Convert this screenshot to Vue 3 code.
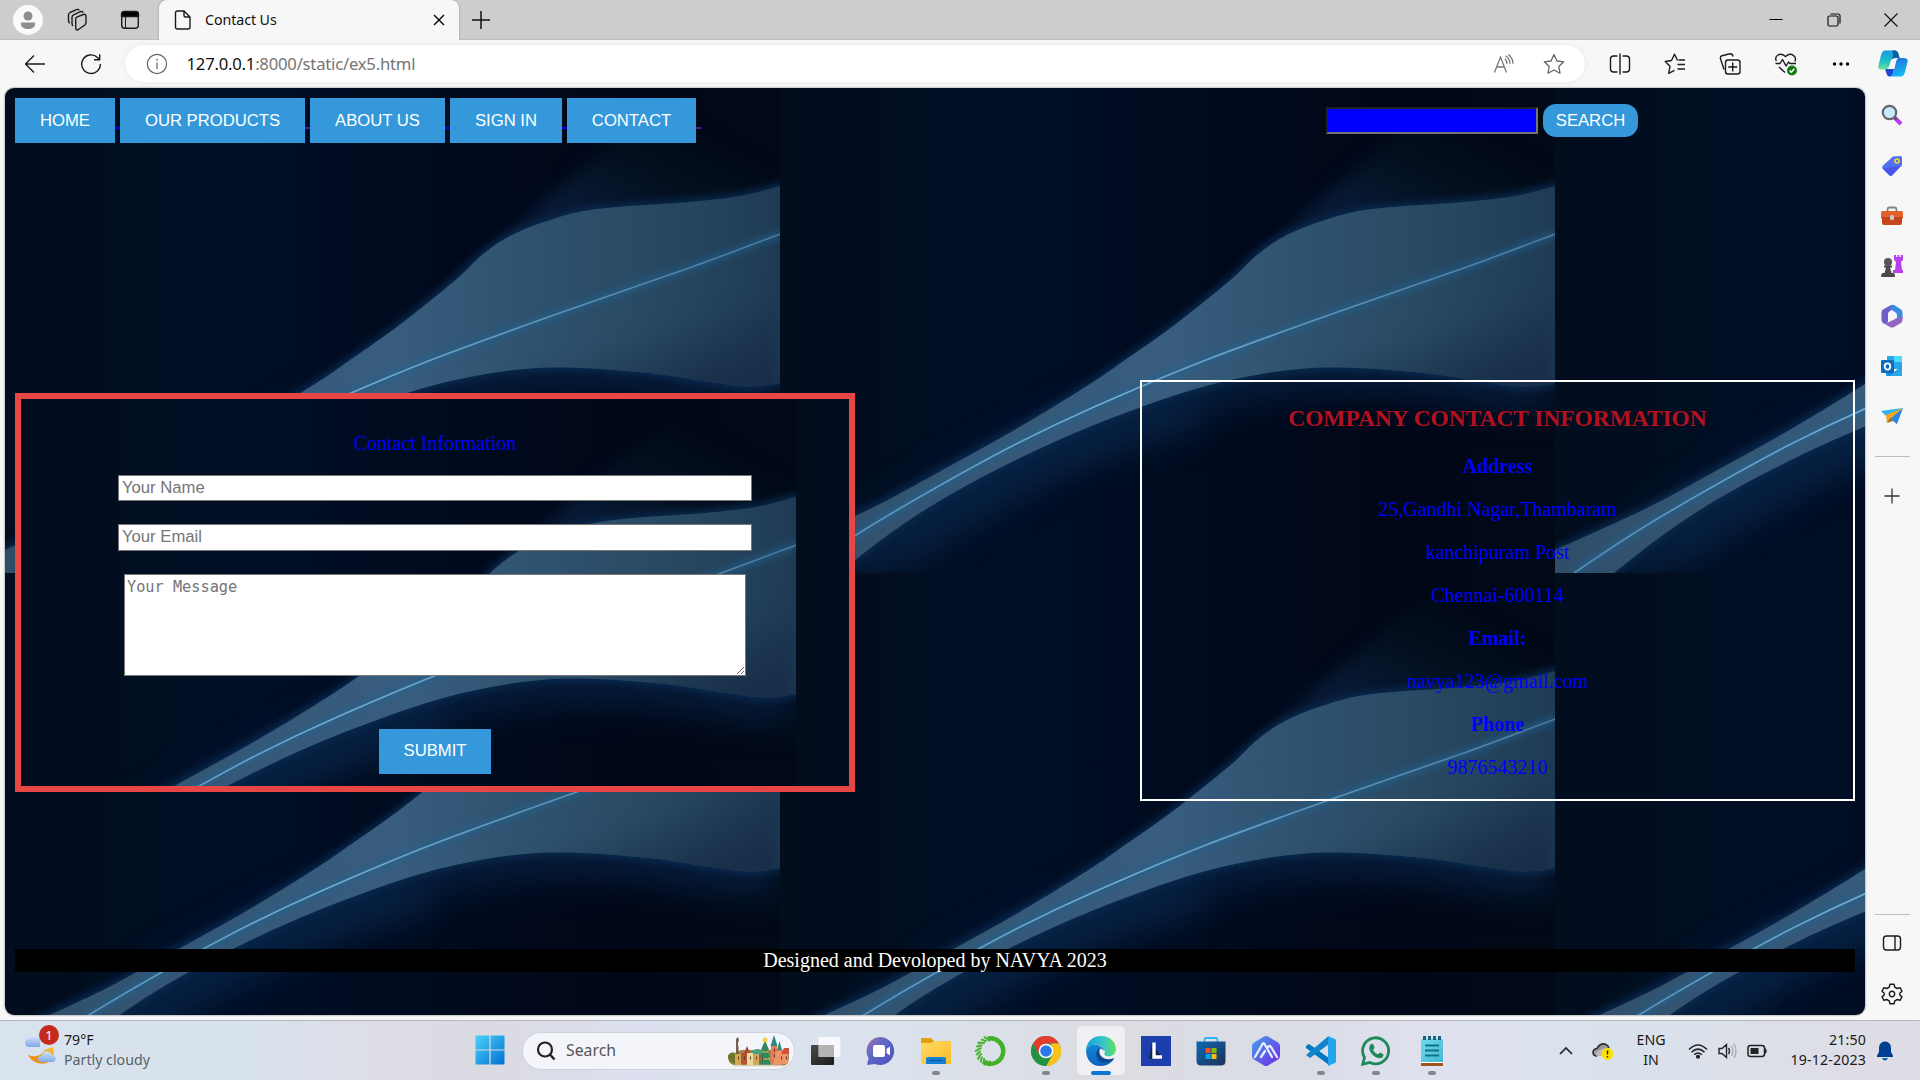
<script setup>
const nav = [
  { t: 'HOME', w: 100, c: '#0000ee' },
  { t: 'OUR PRODUCTS', w: 185, c: '#551a8b' },
  { t: 'ABOUT US', w: 135, c: '#0000ee' },
  { t: 'SIGN IN', w: 112, c: '#0000ee' },
  { t: 'CONTACT', w: 129, c: '#551a8b' }
]
const lines = [
  { t: 'Address', b: true },
  { t: '25,Gandhi Nagar,Thambaram' },
  { t: 'kanchipuram Post' },
  { t: 'Chennai-600114' },
  { t: 'Email:', b: true },
  { t: 'navya123@gmail.com' },
  { t: 'Phone', b: true },
  { t: '9876543210' }
]
const tiles = [0, 1, 2].flatMap((c) => [0, 1].map((r) => ({ x: c * 775, y: r * 485 })))

// Catmull-Rom spline through a list of points, as cubic segments
function curve(p) {
  let d = ''
  for (let i = 0; i < p.length - 1; i++) {
    const a = p[i - 1] || p[i]
    const b = p[i]
    const c = p[i + 1]
    const e = p[i + 2] || c
    const n = [b[0] + (c[0] - a[0]) / 6, b[1] + (c[1] - a[1]) / 6, c[0] - (e[0] - b[0]) / 6, c[1] - (e[1] - b[1]) / 6, c[0], c[1]]
    d += 'C' + n.map((v) => v.toFixed(1)).join(' ')
  }
  return d
}
const upper = [[775, 98], [735, 108], [684, 114], [592, 121], [545, 132], [505, 148], [477, 167], [454, 189], [420, 217], [385, 244], [345, 272], [310, 296], [238, 340], [166, 380], [94, 419], [0, 462]]
const lower = [[59, 485], [112, 444], [168, 408], [238, 371], [314, 337], [402, 305], [465, 289], [520, 281], [574, 280], [644, 285], [698, 293], [735, 298], [755, 298], [775, 295]]
const beam = [[19, 485], [84, 442], [166, 394], [238, 355], [314, 319], [426, 272], [569, 220], [684, 180], [775, 146]]
const wave = 'M775 98' + curve(upper) + 'V485H59' + curve(lower) + 'Z'
const beamPath = 'M19 485' + curve(beam)
const belowWave = 'M59 485' + curve(lower)

const specks = Array.from({ length: 46 }, (_, i) => {
  const a = 1.7 + (i / 46) * 2.9
  const r = 10.6 + ((i * 7) % 9) * 0.55
  return { x: 16 + Math.cos(a) * r, y: 16 + Math.sin(a) * r }
})
</script>

<template>
  <div class="desktop">
    <header class="tabs">
      <div class="cell avatar-cell">
        <svg width="30" height="30" viewBox="0 0 30 30"><circle cx="15" cy="15" r="15" fill="#fafafa" /><circle cx="15" cy="11" r="4.500" fill="#8d8d8d" /><path d="M8 17.500H22V19C22 22.300 19 24 15 24S8 22.300 8 19Z" fill="#8d8d8d" /></svg>
      </div>
      <div class="cell ws">
        <svg width="24" height="24" viewBox="0 0 24 24" class="ln"><path d="M11.800 9.200 18.200 6.500Q21 5.700 21 8.300V14.800Q21 16 19.800 17L13.500 21.500Q10.800 22.800 10.700 20V11Q10.700 9.700 11.800 9.200Z" /><path d="M8 18Q7 17 7 15.500V9.300Q7 7.500 8.500 6.800L15.500 3.700Q17.500 3.200 18.300 4.500" /><path d="M4.700 15.200Q3.500 14.200 3.500 12.700V7Q3.500 5.300 5 4.500L11.500 1.600Q13.300 1 14.300 2.200" /></svg>
      </div>
      <div class="cell ta">
        <svg width="20" height="20" viewBox="0 0 20 20" class="ln"><rect x="1.700" y="1.700" width="16.600" height="16.600" rx="3" /><path d="M1.500 6.500V4.500Q1.500 1.500 4.500 1.500H15.500Q18.500 1.500 18.500 4.500V6.500Z" fill="#000" /><path d="M5.500 6V18" stroke-width="1" /></svg>
      </div>
      <div class="tab">
        <svg width="17" height="20" viewBox="0 0 17 20" class="ln"><path d="M3.500 1H10L16 7V17Q16 19 14 19H3.500Q1.500 19 1.500 17V3Q1.500 1 3.500 1ZM10 1V5.500Q10 7 11.500 7H16" /></svg>
        <span class="tab-title">Contact Us</span>
        <svg class="tab-x" width="12" height="12" viewBox="0 0 12 12"><path d="M1 1 11 11M11 1 1 11" stroke="#111" stroke-width="1.500" /></svg>
      </div>
      <svg class="newtab" width="18" height="18" viewBox="0 0 18 18"><path d="M9 0V18M0 9H18" stroke="#111" stroke-width="1.500" /></svg>
      <div class="winbtns">
        <div><svg width="14" height="14" viewBox="0 0 14 14"><path d="M.5 6.500H13.500" stroke="#000" stroke-width="1" /></svg></div>
        <div><svg width="14" height="14" viewBox="0 0 14 14" fill="none" stroke="#111" stroke-width="1.200"><rect x="1" y="3" width="10" height="10" rx="1.500" /><path d="M3.500 1H11Q13 1 13 3V10.500" /></svg></div>
        <div><svg width="14" height="14" viewBox="0 0 14 14"><path d="M.5.5 13.500 13.500M13.500.5.5 13.500" stroke="#111" stroke-width="1.200" /></svg></div>
      </div>
    </header>

    <div class="toolbar">
      <div class="tb back"><svg width="22" height="20" viewBox="0 0 22 20" class="ln"><path d="M21 10H2M10 1.500 1.500 10 10 18.500" /></svg></div>
      <div class="tb reload"><svg width="22" height="22" viewBox="0 0 22 22" class="ln"><path d="M20.300 11A9.300 9.300 0 1 1 17.500 4.500L19.500 6.500M19.700 1.200V6.700H14" /></svg></div>
      <div class="omnibox">
        <svg class="info" width="22" height="22" viewBox="0 0 22 22" fill="none" stroke="#666" stroke-width="1.200"><circle cx="11" cy="11" r="9.600" /><path d="M11 9.500V16" /><path d="M11 6V7.500" stroke-width="1.600" /></svg>
        <span class="url"><b>127.0.0.1</b>:8000/static/ex5.html</span>
        <svg class="read" width="22" height="20" viewBox="0 0 22 20" fill="none" stroke="#777" stroke-width="1.300"><path d="M1.500 18.500 7.500 3 13.500 18.500M3.700 13H11.300M12 4.800Q14 6.800 14 9.800M12.500 1.800Q17 4.800 17 9.800M15.500.5Q20 4.500 20 9.800" /></svg>
        <svg class="star" width="22" height="22" viewBox="0 0 22 22" fill="none" stroke="#666" stroke-width="1.300" stroke-linejoin="round"><path d="M11 1.500 14 8 20.700 8.800 15.800 13.500 17 20.300 11 17 5 20.300 6.200 13.500 1.300 8.800 8 8Z" /></svg>
      </div>
      <div class="tools">
        <div><svg width="22" height="22" viewBox="0 0 22 22" class="ln"><path d="M8.500 3H4.500Q1.500 3 1.500 6V16Q1.500 19 4.500 19H8.500M11 .5V21.500M13.500 3H17.500Q20.500 3 20.500 6V16Q20.500 19 17.500 19H13.500" /></svg></div>
        <div><svg width="22" height="22" viewBox="0 0 22 22" class="ln"><path d="M13.500 7.500 10.500 1.200 7.500 7.500 1.200 8.500 6 13.300 4.700 20.300 10.500 17.300M14.500 7H21M13.500 11.500H21M13.500 16H21" /></svg></div>
        <div><svg width="22" height="22" viewBox="0 0 22 22" class="ln"><path d="M5 16.500 1.500 5.700Q1 3.500 3 2.700L11 .8Q13.300.5 14 3.500M6.500 9.500Q6.500 7 9 7H18.500Q21 7 21 9.500V18.500Q21 21 18.500 21H9Q6.500 21 6.500 18.500ZM13.700 9.500V18.500M9.200 14H18.200" /></svg></div>
        <div><svg width="24" height="24" viewBox="0 0 24 24" class="ln"><path d="M2.300 9C0 4 6-.5 11.500 4.500 17-.5 23 4 21 9.500M1.500 11.500H6L8.500 7.500 12 14 14.500 10 16 11.500H22M5 15 11 20.500" /><circle cx="18" cy="18.500" r="5" fill="#107c10" stroke="none" /><path d="M15.700 18.500 17.300 20.300 20.300 16.800" stroke="#fff" /></svg></div>
        <div><svg width="18" height="6" viewBox="0 0 18 6"><circle cx="2.500" cy="3" r="1.700" /><circle cx="9" cy="3" r="1.700" /><circle cx="15.500" cy="3" r="1.700" /></svg></div>
      </div>
      <svg class="copilot" width="30" height="27" viewBox="0 0 30 27">
        <defs>
          <linearGradient id="cpA" x1="0" y1="0" x2="0" y2="1"><stop offset="0" stop-color="#1499e0" /><stop offset=".55" stop-color="#20bfc5" /><stop offset="1" stop-color="#6de09a" /></linearGradient>
          <linearGradient id="cpB" x1="0" y1="0" x2=".4" y2="1"><stop offset="0" stop-color="#2b62db" /><stop offset="1" stop-color="#15b9f5" /></linearGradient>
        </defs>
        <path d="M7 19H16L15.500 22Q14.500 26.500 11.500 26.500 9.500 26.500 8.700 24Z" fill="#1c47cf" />
        <path d="M7 .5H17Q19.500.5 20.500 4L21.500 8H17Q13.500 8 12.300 12L11 16.500Q10 19.500 7 19.500H3Q-.5 19.500.5 15.500L3 5Q4.200.5 7 .5Z" fill="url(#cpA)" />
        <path d="M14 .5H17Q19.500.5 20.500 4L21.500 8H17Q15 8 13.800 9.500 16 5 14 .5Z" fill="#0e5d9c" />
        <path d="M20.500 8H26Q30.500 8 29.500 12L27 22Q25.800 26.500 22.500 26.500H12Q14.500 25.500 15.500 22L18 12Q18.700 8.500 20.500 8Z" fill="url(#cpB)" />
      </svg>
    </div>

    <div class="middle">
      <main class="page">
        <svg class="wall" width="1860" height="927" aria-hidden="true">
          <defs>
            <linearGradient id="base"><stop offset="0" stop-color="#020d1e" /><stop offset=".12" stop-color="#020e20" /><stop offset=".3" stop-color="#010e26" /><stop offset=".5" stop-color="#010c20" /><stop offset=".8" stop-color="#010718" /><stop offset="1" stop-color="#020916" /></linearGradient>
            <linearGradient id="wave" gradientUnits="userSpaceOnUse" x1="0" y1="0" x2="775" y2="0"><stop offset="0" stop-color="#2f4d69" /><stop offset=".25" stop-color="#355775" /><stop offset=".5" stop-color="#385d7e" /><stop offset=".65" stop-color="#305370" /><stop offset=".82" stop-color="#294a64" /><stop offset="1" stop-color="#1f3b54" /></linearGradient>
            <linearGradient id="waveDark" gradientUnits="userSpaceOnUse" x1="690" y1="225" x2="715" y2="300"><stop offset="0" stop-color="#172b46" stop-opacity="0" /><stop offset="1" stop-color="#172b46" stop-opacity=".85" /></linearGradient>
            <linearGradient id="haze" gradientUnits="userSpaceOnUse" x1="650" y1="10" x2="580" y2="130"><stop offset="0" stop-color="#04121f" stop-opacity="0" /><stop offset=".4" stop-color="#041320" stop-opacity=".7" /><stop offset="1" stop-color="#081a36" /></linearGradient>
            <linearGradient id="beam" gradientUnits="userSpaceOnUse" x1="0" y1="485" x2="775" y2="146"><stop offset="0" stop-color="#5088b0" /><stop offset=".45" stop-color="#74abd0" /><stop offset="1" stop-color="#47759b" /></linearGradient>
            <filter id="b4" x="-20%" y="-20%" width="140%" height="140%" color-interpolation-filters="sRGB"><feGaussianBlur stdDeviation="3.500" /></filter>
            <filter id="b8" x="-30%" y="-30%" width="160%" height="160%" color-interpolation-filters="sRGB"><feGaussianBlur stdDeviation="8" /></filter>
            <filter id="b25" x="-30%" y="-50%" width="160%" height="200%" color-interpolation-filters="sRGB"><feGaussianBlur stdDeviation="18" /></filter>
            <symbol id="tile" viewBox="0 0 775 485">
              <rect width="775" height="485" fill="url(#base)" />
              <path d="M800-10H690Q600 60 530 120L440 210H800Z" fill="url(#haze)" filter="url(#b8)" />
              <path :d="belowWave" fill="none" stroke="#072143" stroke-width="46" opacity=".85" filter="url(#b25)" />
              <path d="M110 470C200 405 300 345 420 322" fill="none" stroke="#08264a" stroke-width="34" opacity=".7" filter="url(#b25)" />
              <path :d="wave" fill="#0a2b52" stroke="#09274b" stroke-width="7" filter="url(#b4)" clip-path="url(#ribbonClip)" />
              <path :d="wave" fill="url(#wave)" clip-path="url(#ribbonClip)" />
              <g clip-path="url(#ribbonClip)"><path d="M430 310 560 235 775 190V310Z" fill="url(#waveDark)" filter="url(#b8)" clip-path="url(#waveClip)" /></g>
              <path :d="beamPath" fill="none" stroke="#1f6596" stroke-width="7" opacity=".6" filter="url(#b4)" />
              <path :d="beamPath" fill="none" stroke="url(#beam)" stroke-width="1.700" />
            </symbol>
            <clipPath id="ribbonClip"><path d="M-20-20H800V510H-20Z" /></clipPath>
            <clipPath id="waveClip"><path :d="wave" clip-rule="evenodd" /></clipPath>
          </defs>
          <use v-for="(p, i) in tiles" :key="i" href="#tile" :x="p.x" :y="p.y" width="775" height="485" />
        </svg>

        <div class="navrow">
          <nav>
            <a v-for="n in nav" :key="n.t"><button class="blue" :style="{ width: n.w + 'px' }">{{ n.t }}</button><i :style="{ background: n.c }"></i></a>
          </nav>
          <div class="search"><input class="bluein" /><button class="searchbtn">SEARCH</button></div>
        </div>

        <div class="panels">
          <form class="form" @submit.prevent>
            <svg class="wall" width="828" height="387" aria-hidden="true">
              <use href="#tile" x="0" y="0" width="775" height="485" /><use href="#tile" x="775" y="0" width="775" height="485" />
            </svg>
            <span class="legend">Contact Information</span>
            <input class="field name" placeholder="Your Name" />
            <input class="field email" placeholder="Your Email" />
            <textarea class="msg" placeholder="Your Message"></textarea>
            <button class="blue submit">SUBMIT</button>
          </form>
          <section class="company">
            <h3>COMPANY CONTACT INFORMATION</h3>
            <p v-for="l in lines" :key="l.t" :class="{ bold: l.b }">{{ l.t }}</p>
          </section>
        </div>
        <footer class="foot">Designed and Devoloped by NAVYA 2023</footer>
      </main>

      <aside class="side">
        <div class="s"><svg width="22" height="22" viewBox="0 0 22 22"><path d="M13 13 20 20" stroke="#b43df5" stroke-width="4" /><path d="M12.500 12.500 15.500 15.500" stroke="#555" stroke-width="2.500" /><circle cx="8.500" cy="8.500" r="6.700" fill="#c8e9fb" stroke="#666" stroke-width="2.200" /></svg></div>
        <div class="s low"><svg width="22" height="22" viewBox="0 0 22 22"><path d="M12 1.500 19 1Q21 1 21 3V10L11 20.500Q9.500 21.500 8 20L1.500 13.500Q.5 12 2 10.500Z" fill="#4c72ee" /><path d="M1.500 13.500 20.500 10.500 11 20.500Q9.500 21.500 8 20Z" fill="#474be8" opacity=".7" /><circle cx="16" cy="6" r="2" fill="#5274d8" stroke="#fbd33d" stroke-width="1.600" /></svg></div>
        <div class="s low"><svg width="24" height="22" viewBox="0 0 24 22"><path d="M7.500 6.500V4.500Q7.500 2.500 9.500 2.500H14.500Q16.500 2.500 16.500 4.500V6.500" fill="none" stroke="#858585" stroke-width="1.800" /><rect x="2" y="9" width="20" height="11" rx="2" fill="#cb451c" /><rect x="1" y="6" width="22" height="7.500" rx="1.500" fill="#e3602a" /><path d="M1.500 13H22.500" stroke="#a93316" /><rect x="10" y="10" width="4" height="5" rx="1.500" fill="#c9c9c9" /></svg></div>
        <div class="s"><svg width="24" height="24" viewBox="0 0 24 24"><path d="M14 1V6L16 8 15 16H13V19H23V16H22L21 8 23 6V1H21V3H19.500V1H17.500V3H16V1Z" fill="#b741ef" /><circle cx="8" cy="8" r="4" fill="#555" /><path d="M4 11.500H12V13.500H10L11.500 19H14Q15 20 15 23H1Q1 20 2.500 19H4.500L6 13.500H4Z" fill="#4a4a4a" /></svg></div>
        <div class="s"><svg width="22" height="24" viewBox="0 0 22 24"><path d="M10 1 2 5.500Q.5 6.500.5 8.500V16Q.5 18 2 19L4 20Q7 20 7 17V10Q7 8 9 7L14 3Z" fill="#6f5fc8" /><path d="M10 1Q12 .3 14 1.500L20 5.500Q21.500 6.500 21.500 9V14Q20 16.500 16 14.500V11Q16 9 14 8L9 5Z" fill="#3b8be0" /><path d="M21.500 12V16Q21.500 18 20 19L13 23Q11 24 9 23L2 19Q5 20 8 18L15 14Q17 15 21.500 12Z" fill="#9565c4" /><path d="M11.300 7.500 15 9.700V14.300L11.300 16.500 7.500 14.300V9.700Z" fill="#f7f7f7" /></svg></div>
        <div class="s"><svg width="22" height="22" viewBox="0 0 22 22"><rect x="6" y="1" width="15" height="13" rx="1" fill="#28a8ea" /><path d="M13 1H21V7H13Z" fill="#50d9ff" /><path d="M6 7H13V13H6Z" fill="#0364b8" /><path d="M5 12 13 17 21 11V20Q21 21 20 21H6Q5 21 5 20Z" fill="#1490df" /><path d="M21 11 9 21H20Q21 21 21 20Z" fill="#28a8ea" /><rect x="0" y="5" width="13" height="13" rx="1" fill="#0f6cbd" /><ellipse cx="6.500" cy="11.500" rx="2.800" ry="3.200" fill="none" stroke="#fff" stroke-width="1.800" /></svg></div>
        <div class="s"><svg width="22" height="18" viewBox="0 0 22 18"><path d="M0 4 22 1 6 10Z" fill="#2cb3ed" /><path d="M22 1 5 8 6 16Z" fill="#f7a51b" /><path d="M22 1 16 17 9 12Z" fill="#2788e4" /><path d="M6 16 9 11 12 14Z" fill="#ad6818" /></svg></div>
        <hr />
        <div class="plus"><svg width="16" height="16" viewBox="0 0 16 16"><path d="M8 .5V15.500M.5 8H15.500" stroke="#333" stroke-width="1.300" /></svg></div>
        <hr class="second" />
        <div class="s"><svg width="20" height="18" viewBox="0 0 20 18" class="ln"><rect x="1.500" y="2" width="17" height="14" rx="3" /><path d="M13 2V16" /></svg></div>
        <div class="s"><svg width="22" height="22" viewBox="-11 -11 22 22" class="ln"><path d="M-2-9.800H2L2.800-6.800Q4-6.500 5-5.500L8-6.300 10-2.800 7.800-.8V1L10 2.900 8 6.300 5 5.500Q4 6.500 2.800 6.800L2 9.800H-2L-2.800 6.800Q-4 6.500-5 5.500L-8 6.300-10 2.900-7.800 1V-.8L-10-2.800-8-6.300-5-5.500Q-4-6.500-2.800-6.800Z" /><circle r="2.700" /></svg></div>
      </aside>
    </div>

    <div class="taskbar">
      <div class="weather">
        <svg width="36" height="36" viewBox="0 0 36 36">
          <defs><linearGradient id="cl" x1="0" y1="0" x2="0" y2="1"><stop offset="0" stop-color="#d3e4fb" /><stop offset="1" stop-color="#7fa9e8" /></linearGradient><linearGradient id="mo" x1="1" y1="0" x2="0" y2="1"><stop offset="0" stop-color="#f5c02d" /><stop offset="1" stop-color="#ee7a10" /></linearGradient></defs>
          <path d="M5 18Q0 18 0 13.500 1 9 5 9 7 6 11 7 15 8 15 12V18Z" fill="url(#cl)" />
          <path d="M28 18Q31 30 22 34 9 37 3 26 14 30 20 21Z" fill="url(#mo)" />
          <path d="M17 33Q13 33 13 29.500 14 26 17 26.500 19 21 24 22.500 27 25 28 26.500 31 27 30.500 31 30 33 27 33Z" fill="url(#cl)" />
        </svg>
        <span class="badge">1</span>
        <div class="wtext"><span>79°F</span><span class="grey">Partly cloudy</span></div>
      </div>

      <div class="start"><svg width="30" height="30" viewBox="0 0 30 30"><defs><linearGradient id="win" x1="0" y1="0" x2="1" y2="1"><stop offset="0" stop-color="#4cd2fc" /><stop offset="1" stop-color="#0070cf" /></linearGradient></defs><path d="M1 .5H14.400V14.400H.5V1ZM15.600.5H29L29.500 1V14.400H15.600ZM.5 15.600H14.400V29.500H1L.5 29ZM15.600 15.600H29.500V29L29 29.500H15.600Z" fill="url(#win)" /></svg></div>

      <div class="tsearch">
        <svg width="20" height="20" viewBox="0 0 20 20"><circle cx="9" cy="8.500" r="7" fill="none" stroke="#222" stroke-width="2.200" /><path d="M14 13.500 18.500 18.500" stroke="#222" stroke-width="2.400" /></svg>
        <span>Search</span>
        <svg class="town" width="66" height="34" viewBox="0 0 66 34">
          <path d="M1 22Q3 18 8 19L14 16H62V24Q62 32 54 32H12Q2 32 1 24Z" fill="#a9824a" />
          <path d="M25 17Q30 13 36 17V24H25Z" fill="#46a085" />
          <path d="M9 5 11 3 12 6 11 9 12 20H9Z" fill="#756050" />
          <path d="M1 22Q3 17 8 19V30Q1 28 1 22Z" fill="#6d762b" />
          <path d="M8 20H14V31H8ZM26 20H32V31H26Z" fill="#d2a850" /><path d="M14 19H20V31H14ZM32 21H38V31H32Z" fill="#b25335" /><path d="M20 19H26V31H20Z" fill="#ead8a5" /><path d="M17 19 20 12 23 19Z" fill="#a54f38" />
          <path d="M38 6 34 16H36L33 23H35L32 31H44L41 23H43L40 16H42Z" fill="#2f875f" /><circle cx="38" cy="6" r="2.500" fill="#f0ce42" /><path d="M35 18H41M34 25H43" stroke="#e9c54b" />
          <path d="M44 12H50V31H44ZM51 16H54V31H51Z" fill="#e77b58" /><path d="M43.500 12 47 1 50.500 12ZM50 16 52.500 7 55 16Z" fill="#2b8b80" />
          <path d="M47 22 50 17H61V30H47Z" fill="#ef9467" /><path d="M54 20 57 14 62 14V20Z" fill="#cc5239" />
          <path d="M11 24H12M17 24H18M23 24H24M29 24H30M35 25H36M47 16H48M47 22H48M54 24H55M59 24H60" stroke="#5a3627" stroke-width="3" />
          <path d="M7 31.500H56" stroke="#d4cdb2" stroke-width="1.500" />
        </svg>
      </div>

      <div class="apps">
        <div class="app"><svg width="32" height="32" viewBox="0 0 32 32"><defs><linearGradient id="tv" x1="0" y1="0" x2="1" y2="1"><stop offset="0" stop-color="#4a4a48" /><stop offset="1" stop-color="#1c1c1a" /></linearGradient></defs><rect x="1" y="10" width="23" height="20" rx="1" fill="url(#tv)" /><rect x="8.500" y="2" width="22" height="20" rx="1" fill="#fff" opacity=".75" /><rect x="8.500" y="10" width="15.500" height="12" fill="#aaa" opacity=".7" /></svg></div>
        <div class="app"><svg width="30" height="30" viewBox="0 0 30 30"><defs><linearGradient id="chat" x1="0" y1="0" x2="1" y2="1"><stop offset="0" stop-color="#a470a8" /><stop offset=".4" stop-color="#6068c6" /><stop offset="1" stop-color="#4a52bd" /></linearGradient></defs><path d="M15 1A14 14 0 1 1 9 28L1 29 2.500 22A14 14 0 0 1 15 1Z" fill="url(#chat)" /><rect x="7" y="9" width="12" height="12" rx="2" fill="#fff" /><path d="M20.500 13 24 10.500V19.500L20.500 17Z" fill="#fff" /></svg></div>
        <div class="app"><svg width="30" height="28" viewBox="0 0 30 28"><defs><linearGradient id="fold" x1="0" y1="0" x2="1" y2="1"><stop offset="0" stop-color="#ffd968" /><stop offset="1" stop-color="#fbbd24" /></linearGradient></defs><path d="M0 2Q0 1 1 1H10L13 4V8H0Z" fill="#e3a008" /><path d="M0 6H10L13 4H30V27H1L0 26Z" fill="url(#fold)" /><path d="M5 27V22Q5 20 7 20H23Q25 20 25 22V27Z" fill="#1380d8" /><path d="M8.500 23.500H21.500" stroke="#0a4f90" /></svg><em></em></div>
        <div class="app"><svg width="32" height="32" viewBox="0 0 32 32"><path d="M13 3.500A12.800 12.800 0 1 1 8 26.500" fill="none" stroke="#43b02a" stroke-width="4.500" /><circle v-for="(s, i) in specks" :key="i" :cx="s.x" :cy="s.y" r="1.100" fill="#43b02a" /></svg></div>
        <div class="app"><svg width="30" height="30" viewBox="0 0 30 30"><circle cx="15" cy="15" r="15" fill="#34a853" /><path d="M2 7.500A15 15 0 0 1 28 7.500H15L8.500 18.800Z" fill="#e33b2e" /><path d="M28 7.500A15 15 0 0 1 15 30L21.500 18.700 20 7.500Z" fill="#fbc116" /><path d="M2 7.500A15 15 0 0 0 15 30L21.500 18.800 15 20 8.500 18.800Z" fill="#229342" /><circle cx="15" cy="15" r="7.300" fill="#fff" /><circle cx="15" cy="15" r="5.800" fill="#2b78e8" /></svg><em></em></div>
        <div class="app active"><svg width="30" height="30" viewBox="0 0 30 30"><defs><linearGradient id="eg"><stop offset="0" stop-color="#1b9ce0" /><stop offset=".6" stop-color="#36c8c4" /><stop offset="1" stop-color="#64e05a" /></linearGradient><linearGradient id="eb" x1="0" y1="0" x2="0" y2="1"><stop offset="0" stop-color="#1688d8" /><stop offset="1" stop-color="#0c62ba" /></linearGradient></defs><path d="M0 14C1 5 7 0 15 0 24 0 30 6 30 13 30 19 25 21 20 20 18 19 18 18 19 16 18 10 12 7 6 9Q2 11 0 14Z" fill="url(#eg)" /><path d="M0 14Q5 7 12 9 18 11 18.500 15 16 12 13 13 10 17 13 22 18 28 27 24.500 22 30 14 30C6 30 0 24 0 14Z" fill="url(#eb)" /><path d="M12 13Q9 17 11 22 15 30 27 24.500L28 22Q21 25 16 21 12 18 14 12Z" fill="#11478f" /></svg><em></em></div>
        <div class="app"><svg width="30" height="30" viewBox="0 0 30 30"><rect width="30" height="30" fill="#1d3fae" /><path d="M11 7 8 23H20V20Z" fill="#0d2754" /><path d="M13 6.500V21H21" fill="none" stroke="#fff" stroke-width="3.400" /></svg></div>
        <div class="app"><svg width="30" height="30" viewBox="0 0 30 30"><defs><linearGradient id="st" x1="0" y1="0" x2="1" y2="1"><stop offset="0" stop-color="#0f68b4" /><stop offset="1" stop-color="#1d3155" /></linearGradient></defs><path d="M8.500 7V3.500Q8.500 2 10 2H20Q21.500 2 21.500 3.500V7" fill="none" stroke="#29b7f3" stroke-width="1.800" /><path d="M.5 5.500H29.500V25Q29.500 29.500 25 29.500H5Q.5 29.500.5 25Z" fill="url(#st)" /><rect x="9.500" y="12" width="5" height="5" fill="#f25022" /><rect x="15.500" y="12" width="5" height="5" fill="#7fba00" /><rect x="9.500" y="18" width="5" height="5" fill="#00a4ef" /><rect x="15.500" y="18" width="5" height="5" fill="#ffb900" /></svg></div>
        <div class="app"><svg width="30" height="32" viewBox="0 0 30 32"><defs><linearGradient id="hx" x1="0" y1="0" x2="1" y2="1"><stop offset="0" stop-color="#45a0e8" /><stop offset="1" stop-color="#7028e8" /></linearGradient></defs><path d="M13 1.500Q15 .5 17 1.500L27 7.500Q29 8.500 29 11V21Q29 23 27 24.500L17 30.500Q15 31.500 13 30.500L3 24.500Q1 23 1 21V11Q1 8.500 3 7.500Z" fill="url(#hx)" /><path d="M4 22 11.500 9Q12.500 7.500 13.500 9L21 22M10 22 14 16M17 12Q18.500 10 20 12L26 22" fill="none" stroke="#e4ecff" stroke-width="2.300" stroke-linecap="round" /></svg></div>
        <div class="app"><svg width="30" height="30" viewBox="0 0 30 30"><path d="M0 10 3 8 23 22V29L0 12Z" fill="#0078bf" /><path d="M0 19 22 .5 23 8 4 22Z" fill="#1484cd" /><path d="M22 0 29 3Q30 3.500 30 5V25Q30 26.500 29 27L22 30Z" fill="#25a5ee" /></svg><em></em></div>
        <div class="app"><svg width="30" height="30" viewBox="0 0 30 30"><path d="M1.800 28.200 3.500 21.500A13 13 0 1 1 9 26.500Z" fill="none" stroke="#1f8a59" stroke-width="2.800" /><path d="M10 8Q12 7 12.800 9.500L13.500 12 12 14Q13.500 17 17 18.300L19 16.500 22.300 18.200Q23 21 20 22 15 23 10.500 17.500 6 12 10 8Z" fill="#1f8a59" /></svg><em></em></div>
        <div class="app"><svg width="24" height="32" viewBox="0 0 24 32"><defs><linearGradient id="np" x1="0" y1="0" x2="1" y2="1"><stop offset="0" stop-color="#6ddcee" /><stop offset="1" stop-color="#45b3d0" /></linearGradient></defs><rect x="1" y="4" width="22" height="25" rx="1.500" fill="url(#np)" /><path d="M1 28H23V31H1Z" fill="#9c541a" /><path d="M1 27.500H23" stroke="#fff" /><path d="M4.500 1V5M9.500 1V5M14.500 1V5M19.500 1V5" stroke="#11637f" stroke-width="3" /><path d="M5 10.500H19M5 15.500H19M5 20.500H19" stroke="#11708c" stroke-width="1.800" /></svg><em></em></div>
      </div>

      <div class="tray">
        <div class="chev"><svg width="14" height="8" viewBox="0 0 14 8"><path d="M1 7 7 1 13 7" fill="none" stroke="#222" stroke-width="1.700" /></svg></div>
        <div class="cloud"><svg width="22" height="18" viewBox="0 0 22 18"><path d="M5 14Q1 14 1 10.500 1 7 5 6.500 8 1 13 2 16 3 17 6" fill="#9b9b9b" stroke="#2d2d2d" stroke-width="1.600" /><path d="M5 14Q2 12 6 9 11 6 18 6L15 14Z" fill="#bcbcbc" /><circle cx="15.500" cy="12" r="6" fill="#ffe100" /><path d="M15.500 8.500V12.500M15.500 14V15.500" stroke="#222" stroke-width="1.500" /></svg></div>
        <div class="lang"><span>ENG</span><span>IN</span></div>
        <div class="sys">
          <svg width="20" height="16" viewBox="0 0 20 16" fill="none" stroke="#222" stroke-width="1.500"><path d="M1 6.500Q10-2.500 19 6.500M3.500 9.200Q10 3 16.500 9.200M6.200 11.800Q10 8.200 13.800 11.800" /><circle cx="10" cy="13.800" r="1.300" fill="#222" /></svg>
          <svg width="20" height="16" viewBox="0 0 20 16" fill="none" stroke="#222" stroke-width="1.400"><path d="M1 5.500H4L8.500 1.500V14.500L4 10.500H1ZM10.500 5Q12.500 8 10.500 11" /><path d="M13.500 3Q16 8 13.500 13M16 1Q20 8 16 15" stroke="#aaa" /></svg>
          <svg width="21" height="14" viewBox="0 0 21 14"><rect x="1" y="1.500" width="16.500" height="11" rx="2.500" fill="none" stroke="#222" stroke-width="1.500" /><rect x="3.500" y="4" width="8" height="6" fill="#222" /><path d="M18 4.500H19Q20.500 7 19 9.500H18Z" fill="#222" /></svg>
        </div>
        <div class="clock"><span>21:50</span><span>19-12-2023</span></div>
        <svg class="bell" width="18" height="20" viewBox="0 0 18 20"><path d="M9 .5Q15 1 15 7V11L17 14.500V16H1V14.500L3 11V7Q3 1 9 .5Z" fill="#003e92" /><path d="M6 17H12Q11 19.500 9 19.500T6 17Z" fill="#0a63b0" /></svg>
      </div>
    </div>
  </div>
</template>

<style>
body { margin: 0; overflow: hidden; }
</style>

<style scoped>
* { box-sizing: border-box; }
.desktop { width: 1920px; height: 1080px; display: flex; flex-direction: column; background: #f7f7f7; font-family: "Noto Sans", "Open Sans", sans-serif; overflow: hidden; }
svg { display: block; flex: none; }
.ln { fill: none; stroke: #1b1b1b; stroke-width: 1.4; stroke-linejoin: round; }
.tabs { height: 40px; flex: none; background: #cdcdcd; display: flex; align-items: center; box-shadow: inset 0 -1px #bdbdbd; }
.cell { display: flex; justify-content: center; }
.avatar-cell { width: 54px; padding-left: 1px; }
.ws { width: 46px; }
.ta { width: 59px; }
.tab { width: 300px; height: 40px; background: #f7f7f7; border-radius: 8px 8px 0 0; display: flex; align-items: center; padding-left: 15px; box-shadow: 0 0 2px #888; clip-path: inset(0 -3px 0 -3px); }
.tab-title { font-size: 14.2px; margin-left: 14px; margin-top: -2px; letter-spacing: -.05px; flex: 1; color: #111; }
.tab-x { margin-right: 14px; }
.newtab { margin-left: 13px; }
.winbtns { margin-left: auto; display: flex; }
.winbtns div { width: 57.5px; display: flex; justify-content: center; }
.toolbar { height: 48px; flex: none; display: flex; align-items: center; background: #f7f7f7; padding-bottom: 1px; }
.tb { display: flex; justify-content: center; }
.back { width: 69px; }
.reload { width: 43px; }
.omnibox { margin-left: 13px; width: 1460px; height: 37px; border-radius: 19px; background: #fff; display: flex; align-items: center; box-shadow: 0 0 4px #e4e4e4; }
.info { margin-left: 21px; }
.url { margin-left: 18.5px; font-size: 16.7px; letter-spacing: -.23px; color: #757575; flex: 1; margin-top: -1px; }
.url b { font-weight: 400; color: #111; }
.star { margin: 0 20px 0 28px; }
.tools { display: flex; margin-left: 7px; }
.tools div { width: 55.3px; height: 24px; display: flex; justify-content: center; align-items: center; }
.copilot { margin-left: 10px; }
.middle { height: 932px; flex: none; display: flex; padding-left: 5px; }
.page { width: 1860px; height: 927px; position: relative; border-radius: 9px; overflow: hidden; isolation: isolate; padding: 10px; font-family: "Liberation Serif", serif; font-size: 20px; box-shadow: 0 0 2px #555; }
.wall { position: absolute; inset: 0; z-index: -1; }
.navrow { display: flex; align-items: flex-start; height: 45px; }
nav { display: flex; }
nav a { display: flex; }
nav i { width: 5px; height: 2px; margin-top: 29px; }
.blue { height: 45px; padding: 0; border: 0; background: #3498db; color: #fff; font: 16.667px/19px "Liberation Sans", sans-serif; white-space: nowrap; }
.search { margin-left: auto; margin-right: 217px; display: flex; align-items: center; gap: 5px; margin-top: 6px; }
.bluein { width: 212px; height: 27px; background: #00f; border: 2px inset #767676; padding: 0; }
.searchbtn { width: 95px; height: 33px; border: 0; border-radius: 13px; background: #3498db; color: #fff; padding: 0; font: 16.667px "Liberation Sans", sans-serif; }
.panels { display: flex; justify-content: space-between; align-items: flex-start; margin-top: 237px; height: 421px; }
.form { position: relative; z-index: 0; margin-top: 13px; width: 840px; height: 399px; border: 6px solid #e84545; display: flex; flex-direction: column; align-items: center; overflow: hidden; }
.legend { color: #00f; line-height: 23px; margin-top: 33px; }
.field { width: 634px; height: 26px; padding: 1px 3px; border: 1px solid #767676; background: #fff; font: 16.667px "Liberation Sans", sans-serif; margin: 0; }
.name { margin-top: 20px; }
.email { margin-top: 23px; height: 27px; padding-bottom: 3px; }
.field::placeholder, .msg::placeholder { color: #757575; opacity: 1; }
.msg { width: 622px; height: 102px; margin-top: 23px; border: 1px solid #767676; border-radius: 0; background: #fff; padding: 3px 2px 2px; font: 15.25px/19px "DejaVu Sans Mono", monospace; resize: both; }
.submit { width: 112px; margin-top: 53px; flex: none; padding-bottom: 2px; }
.company { width: 715px; height: 421px; border: 2px solid #fff; text-align: center; color: #00f; padding-top: 23px; }
.company h3 { margin: 0 0 23px; font-size: 23.4px; line-height: 27px; color: #b31020; }
.company p { margin: 0 0 20px; line-height: 23px; }
.company .bold { font-weight: 700; }
.foot { margin-top: 148px; height: 23px; line-height: 23px; background: #000; color: #fff; text-align: center; }
.side { width: 55px; display: flex; flex-direction: column; align-items: center; padding: 2px 1px 0 0; }
.s { height: 50.2px; flex: none; display: flex; align-items: center; }
.low { padding-top: 2px; }
hr { width: 35px; height: 1px; border: 0; background: #bdbdbd; margin: 15px 0 0; flex: none; }
.plus { height: 78px; display: flex; align-items: center; flex: none; }
.second { margin: 379px 0 3px; }
.taskbar { height: 60px; flex: none; display: flex; align-items: center; border-top: 1px solid #b3b6c0; background: linear-gradient(90deg, #d9e3ee 0, #d8e2ed 13%, #dedde6 20%, #dadae2 25%, #dce0ee 33%, #dae3ed 45%, #dcdce2 58%, #dadde6 68%, #dfe1ef 75%, #d9e2ec 84%, #dfdce4 100%); }
.weather { width: 475px; display: flex; align-items: center; padding-left: 25px; position: relative; margin-top: -8px; }
.badge { position: absolute; left: 39px; top: 1px; width: 20px; height: 20px; border-radius: 50%; background: #c42b1c; color: #fff; font-size: 13px; line-height: 20px; text-align: center; }
.wtext { display: flex; flex-direction: column; font-size: 14.2px; line-height: 20px; margin: 6px 0 0 3px; color: #1a1a1a; }
.wtext .grey { color: #5a5f64; }
.start { width: 47px; }
.start svg { margin-top: -1px; }
.tsearch { width: 273px; height: 38px; border-radius: 19px; background: #f4f5fa; border: 1px solid #cfd2db; display: flex; align-items: center; padding-left: 13px; font-size: 15.8px; color: #555; overflow: hidden; }
.tsearch span { margin: -2px 0 0 10px; flex: 1; }
.town { margin-right: 1px; }
.apps { display: flex; margin-left: 3px; }
.app { width: 55.1px; height: 59px; display: flex; align-items: center; justify-content: center; position: relative; z-index: 0; }
.app em { position: absolute; bottom: 5px; width: 8px; height: 4px; border-radius: 2px; background: #85858a; }
.active em { width: 20px; background: #0a78d4; }
.active::before { content: ""; position: absolute; z-index: -1; width: 48px; height: 49px; top: 5px; border-radius: 5px; background: #f0f0f4; }
.tray { margin-left: auto; display: flex; align-items: center; color: #1a1a1a; font-size: 14.2px; line-height: 20px; padding-right: 26px; }
.chev { width: 26px; }
.cloud { margin-left: 7px; }
.lang { margin-left: 12px; margin-top: -1px; width: 50px; text-align: center; display: flex; flex-direction: column; }
.sys { display: flex; align-items: center; gap: 9.5px; margin-left: 12px; }
.clock { display: flex; flex-direction: column; margin: -2px 0 0 20px; width: 78px; white-space: nowrap; align-items: flex-end; letter-spacing: .15px; }
.bell { margin-left: 10px; }
</style>
